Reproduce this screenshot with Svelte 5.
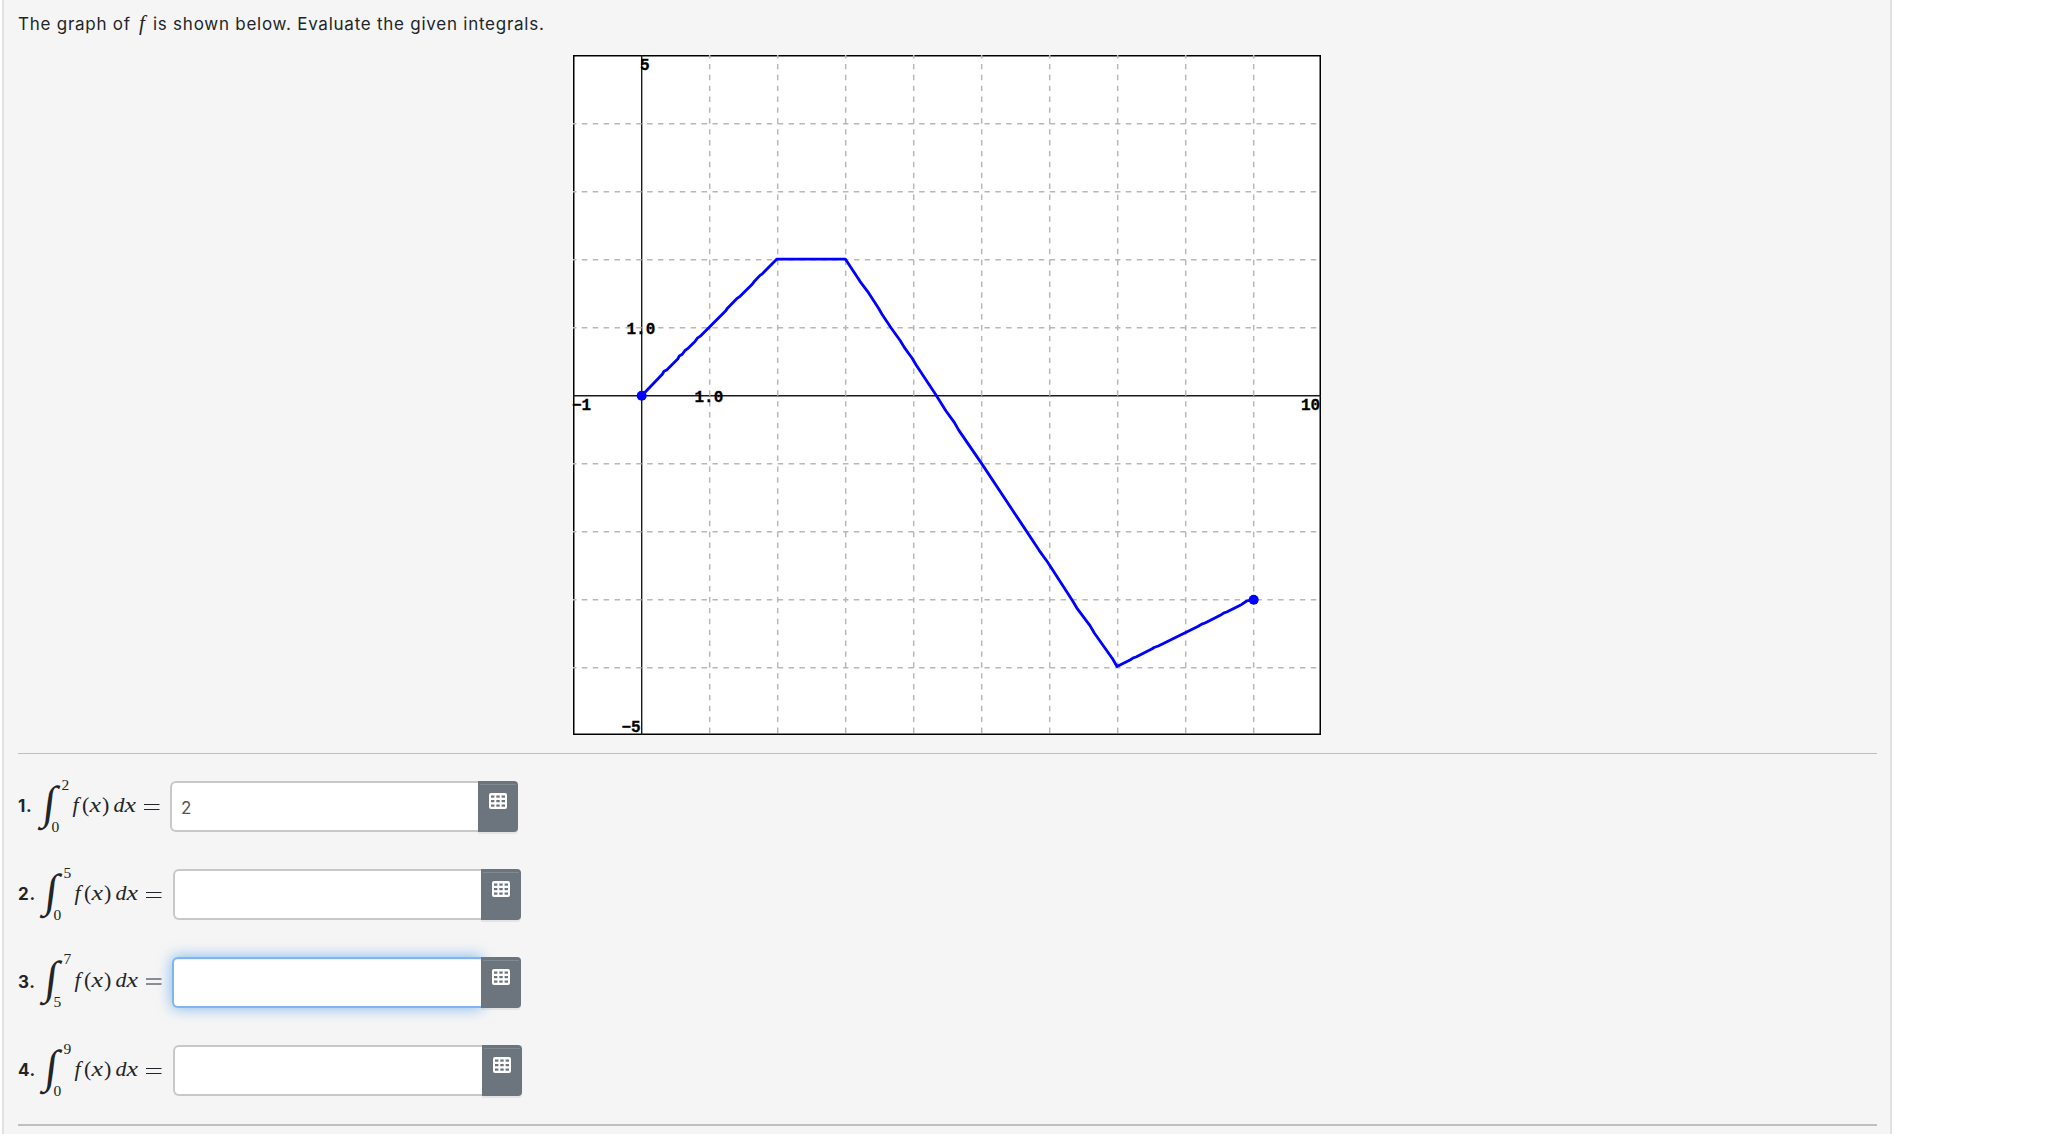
<!--
  Integral exercise: a piecewise linear graph of f, followed by one
  answer row per definite integral.
-->
<script lang="ts">
  type Point = [number, number];
  type Question = {
    n: number;
    lower: string;
    upper: string;
    value: string;
    dx: number;
    dy: number;
    numWidth: number;
    wide?: boolean;
    active?: boolean;
  };

  const UNIT = 68;
  const ORIGIN_X = 68.7;
  const ORIGIN_Y = 340.7;

  const ends: Point[] = [[0, 0], [9, -3]];
  const cols = [1, 2, 3, 4, 5, 6, 7, 8, 9];
  const rows = [4, 3, 2, 1, -1, -2, -3, -4];

  const px = (x: number) => ORIGIN_X + x * UNIT;
  const py = (y: number) => ORIGIN_Y - y * UNIT;

  // sampled plot of f, in graph pixels; the samples are slightly uneven
  const curve = [
    '68.7,340.7 89.3,319.2 91,316.2 93.7,314.9 104.7,304.1 106.3,301 109.3,299.3 112,295.5',
    '114.3,293.9 122,286.5 124.3,283.2 127,281.4 153,255.4 154.7,252.9 163.7,243.7 166.3,241.9',
    '178.7,229.8 181,226.8 187,220.4 189.3,218.8 203.7,204.2 272.5,204.2',
    '287,226.3 294.7,236.6 305.7,253.5 309,259.3 318,272.8 327.3,285.7 331.3,292.4 339,303',
    '343,309.8 363,340 373,356 381.3,367.4 385.7,375.1 408.7,408.6 466.3,495.6 474.7,507.3',
    '499.7,546 503.7,552.8 517,570.6 521.3,578 539.7,604 544,611.5',
    '557,605 560.3,602.8 563,602 578.7,594.1 581,592.5 585.3,591 625.3,571.3 628.7,569.1',
    '632,568 648.7,559.4 651,557.9 653.7,557 668.7,549.4 673.7,546 680.3,544.7'
  ].join(' ');

  let questions: Question[] = $state([
    { n: 1, lower: '0', upper: '2', value: '2', dx: 0, dy: 0, numWidth: 20 },
    { n: 2, lower: '0', upper: '5', value: '', dx: -1, dy: 0, numWidth: 23 },
    { n: 3, lower: '5', upper: '7', value: '', dx: -1, dy: -1.5, numWidth: 23, active: true },
    { n: 4, lower: '0', upper: '9', value: '', dx: -1, dy: 0, numWidth: 23, wide: true }
  ]);
</script>

<main class="problem">
  <p class="prompt">
    <span class="before">The graph of</span><i>f</i><span>is shown below. Evaluate the given integrals.</span>
  </p>

  <svg class="graph" viewBox="0 0 748 680" role="img" aria-label="Graph of f">
    <rect width="748" height="680" fill="#fff" />
    <rect class="frame" x="0.75" y="0.75" width="746.5" height="678.5" />
    <line class="axis" x1={ORIGIN_X} y1="0" x2={ORIGIN_X} y2="680" />
    <line class="axis" x1="0" y1={ORIGIN_Y} x2="748" y2={ORIGIN_Y} />
    {#each cols as c}
      <line class="grid" x1={px(c)} y1="0" x2={px(c)} y2="680" />
    {/each}
    {#each rows as r}
      <line class="grid" x1="0" y1={py(r)} x2="748" y2={py(r)} />
    {/each}
    <polyline class="curve" points={curve} />
    {#each ends as [x, y]}
      <circle cx={px(x)} cy={py(y)} r="5" fill="#00f" />
    {/each}
    <g class="labels">
      <text x="67" y="15">5</text>
      <text x="53.5" y="279">1.0</text>
      <text x="121.5" y="347">1.0</text>
      <text x="-1" y="355">−1</text>
      <text x="728" y="355">10</text>
      <text x="48.5" y="677">−5</text>
    </g>
  </svg>

  <hr />

  <ol class="questions">
    {#each questions as q (q.n)}
      <li>
        <b style:width="{q.numWidth}px">{q.n}.</b>
        <svg class="formula" width="132" height="60" viewBox="0 0 132 60">
          <g transform="translate({q.dx} {q.dy})">
            <text class="int" transform="translate(3.5 42) skewX(-7)">∫</text>
            <text class="limit" x="23.5" y="13.5">{q.upper}</text>
            <text class="limit" x="13.5" y="56">{q.lower}</text>
            <text class="var" x="34.5" y="36">f</text>
            <text class="op" x="44" y="36">(</text>
            <text class="var" x="51.5" y="36" textLength="11.5" lengthAdjust="spacingAndGlyphs">x</text>
            <text class="op" x="64" y="36">)</text>
            <text class="var" x="75.5" y="36">d</text>
            <text class="var" x="86.5" y="36" textLength="11.5" lengthAdjust="spacingAndGlyphs">x</text>
            <path class="eq" d="M106 28.5H121.5M106 33.5H121.5" />
          </g>
        </svg>
        <div class="answer" class:wide={q.wide} class:active={q.active}>
          <input type="text" bind:value={q.value} aria-label="Answer {q.n}" />
          <button type="button" aria-label="Equation editor">
            <svg width="18" height="16" viewBox="0 0 18 16">
              <rect width="18" height="16" rx="2" fill="#fff" />
              {#each [2.5, 7, 11.5] as y}
                {#each [2, 7.3, 12.6] as x}
                  <rect {x} {y} width="3.4" height="2.2" fill="#6c757d" />
                {/each}
              {/each}
            </svg>
          </button>
        </div>
      </li>
    {/each}
  </ol>

  <hr class="end" />
</main>

<style>
  :global(body) {
    background: #fff;
    overflow: hidden;
  }
  .problem {
    box-sizing: border-box;
    width: 1890px;
    height: 1140px;
    margin-left: 2px;
    padding: 13px 13px 0 14px;
    border: 2px solid #e2e2e2;
    border-top: 0;
    background: #f5f5f5;
    color: #212529;
    font-family: Inter, 'Liberation Sans', sans-serif;
  }
  .prompt {
    display: flex;
    align-items: baseline;
    height: 22px;
    margin: 0 0 20px;
    font-size: 17px;
    line-height: 21px;
    letter-spacing: 0.75px;
    white-space: nowrap;
  }
  .before {
    width: 118px;
  }
  .prompt i {
    box-sizing: border-box;
    width: 17px;
    padding-left: 3px;
    font-family: 'Liberation Serif', serif;
    font-size: 21px;
    line-height: 1;
  }
  .graph {
    display: block;
    width: 748px;
    height: 680px;
    margin-left: 555px;
    overflow: visible;
  }
  .frame {
    fill: none;
    stroke: #000;
    stroke-width: 1.5;
  }
  .axis {
    stroke: #1a1a1a;
    stroke-width: 1.4;
  }
  .grid {
    stroke: #b8b8b8;
    stroke-width: 1.5;
    stroke-dasharray: 5.44 5.44;
    stroke-dashoffset: 2;
  }
  .curve {
    fill: none;
    stroke: #00f;
    stroke-width: 2.8;
    stroke-linejoin: round;
  }
  .labels {
    font: bold 16px 'Liberation Mono', monospace;
    stroke: #000;
    stroke-width: 0.3;
  }
  hr {
    height: 1px;
    margin: 18px 0 27px;
    border: 0;
    background: #bfbfbf;
  }
  hr.end {
    height: 2px;
    margin: 28px 0 0;
  }
  .questions {
    display: flex;
    flex-direction: column;
    gap: 37px;
    margin: 0;
    padding: 0;
    list-style: none;
  }
  li {
    display: flex;
    height: 51px;
  }
  b {
    font-size: 17px;
    line-height: 50px;
    letter-spacing: 0.7px;
  }
  .formula {
    flex: none;
    margin-top: -5px;
    overflow: visible;
    fill: #212529;
    font-family: 'Liberation Serif', serif;
  }
  .int {
    font-size: 46px;
    font-style: italic;
  }
  .limit {
    font-size: 15.5px;
  }
  .var {
    font-size: 22px;
    font-style: italic;
  }
  .op {
    font-size: 22px;
  }
  .eq {
    stroke: #212529;
    stroke-width: 1;
  }
  .answer {
    display: flex;
    width: 348px;
  }
  .answer.wide {
    width: 349px;
  }
  input {
    flex: 1;
    min-width: 0;
    box-sizing: border-box;
    padding: 2px 9px 0;
    border: 2px solid #c8c8c8;
    border-right: 0;
    border-radius: 6px 0 0 6px;
    outline: 0;
    background: #fff;
    color: #555;
    font: 17px Inter, 'Liberation Sans', sans-serif;
  }
  .active input {
    margin-left: -1px;
    border-color: #80b5ee;
    box-shadow: inset 0 1px 1px rgba(0, 0, 0, 0.075), 0 0 14px 1px rgba(82, 158, 236, 0.65);
  }
  button {
    position: relative;
    display: flex;
    justify-content: center;
    align-items: flex-start;
    width: 40px;
    padding: 12px 0 0;
    border: 0;
    border-radius: 0 4px 4px 0;
    background: #6c757d;
    box-shadow: 0 2px 1px rgba(0, 0, 0, 0.07);
  }
  button::before {
    content: '';
    position: absolute;
    inset: 3px 2px auto;
    height: 1px;
    background: #828a91;
  }
</style>
